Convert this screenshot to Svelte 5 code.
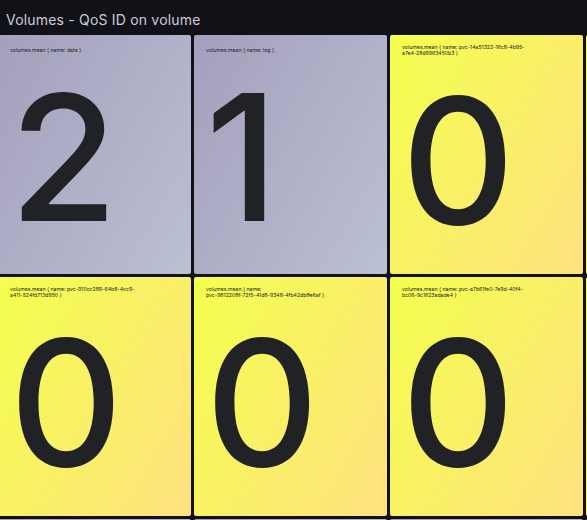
<script>
  const tiles = [
    { lines: ['volumes.mean { name: data }'], value: '2', tone: 'violet' },
    { lines: ['volumes.mean { name: log }'], value: '1', tone: 'violet' },
    { lines: ['volumes.mean { name: pvc-14a51322-16c8-4b95-', 'a7e4-28d9963450b3 }'], value: '0', tone: 'yellow' },
    { lines: [], value: '', tone: 'yellow' },
    { lines: ['volumes.mean { name: pvc-910cc289-64b8-4cc9-', 'a411-524fd713d950 }'], value: '0', tone: 'yellow' },
    { lines: ['volumes.mean { name:', 'pvc-9812208f-72f5-41d8-9348-4fb42db8e6af }'], value: '0', tone: 'yellow' },
    { lines: ['volumes.mean { name: pvc-a7b61fe0-7e9d-40f4-', 'bc06-9c1623adade4 }'], value: '0', tone: 'yellow' },
    { lines: [], value: '', tone: 'yellow' },
    { lines: [], value: '', tone: 'violet' },
    { lines: [], value: '', tone: 'violet' },
    { lines: [], value: '', tone: 'violet' },
    { lines: [], value: '', tone: 'violet' }
  ];
</script>

<section class="panel">
  <h2>Volumes - QoS ID on volume</h2>
  <div class="grid">
    {#each tiles as tile}
      <article class={['tile', tile.tone, tile.lines.length > 1 && 'double']}>
        <div class="label">
          {#each tile.lines as line}<div>{line}</div>{/each}
        </div>
        <div class="value">{tile.value}</div>
      </article>
    {/each}
  </div>
</section>

<style>
  :global(body) {
    margin: 0;
    background: #111217;
  }
  .panel {
    width: 587px;
    height: 520px;
    overflow: hidden;
    background: #111217;
    font-family: Inter, sans-serif;
    color: #202226;
  }
  h2 {
    box-sizing: border-box;
    height: 35px;
    margin: 0;
    padding: 9px 0 0 6px;
    font-size: 14px;
    font-weight: 400;
    line-height: 22px;
    letter-spacing: 0.19px;
    color: #ccccdc;
    white-space: nowrap;
  }
  .grid {
    display: grid;
    grid-template-columns: repeat(4, 193px);
    grid-auto-rows: 239px;
    gap: 3px;
    margin-left: -2px;
  }
  .tile {
    box-sizing: border-box;
    padding: 12px 0 0 12px;
    border-radius: 2px;
  }
  .tile.double {
    padding-top: 9px;
  }
  .violet {
    background: linear-gradient(120deg, #a49fbd, #bbc0d3);
  }
  .yellow {
    background: linear-gradient(120deg, #f3ff4d, #ffe180);
  }
  .label {
    font-size: 5.16px;
    line-height: 6px;
    white-space: nowrap;
  }
  .value {
    margin-left: -0.5px;
    font-size: 175.5px;
    font-weight: 500;
    line-height: 208px;
  }
</style>
